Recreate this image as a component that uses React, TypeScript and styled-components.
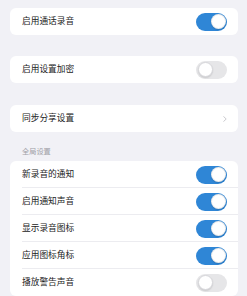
import React from "react";
import styled, { createGlobalStyle } from "styled-components";

const Global = createGlobalStyle`
  html, body { margin: 0; padding: 0; background: #f1f1f6; }
  body { font-family: "Noto Sans CJK SC", "Noto Sans", sans-serif; -webkit-font-smoothing: antialiased; }
`;

const Page = styled.div`
  width: 247px;
  height: 296px;
  overflow: hidden;
  padding: 8px 9px 0 10px;
  box-sizing: border-box;
  display: flex;
  flex-direction: column;
`;

const Card = styled.div<{ $gap?: number }>`
  background: #ffffff;
  border-radius: 6px;
  margin-bottom: ${(p) => p.$gap ?? 0}px;
  overflow: hidden;
  flex-shrink: 0;
`;

const Row = styled.div<{ $divider?: boolean }>`
  height: 27px;
  display: flex;
  align-items: center;
  justify-content: space-between;
  padding: 0 11px 0 12px;
  box-sizing: border-box;
  position: relative;
  ${(p) =>
    p.$divider
      ? `&::after { content: ""; position: absolute; left: 12px; right: 0; bottom: 0; height: 1px; background: #ececf0; }`
      : ""}
`;

const Label = styled.span`
  font-size: 8.7px;
  color: #222;
  line-height: 1;
`;

const SectionTitle = styled.div`
  font-size: 7.2px;
  color: #a0a0a6;
  padding: 16px 0 0 12px;
  height: 30px;
  box-sizing: border-box;
  line-height: 1;
`;

const Track = styled.div<{ $on: boolean }>`
  width: 31px;
  height: 18px;
  border-radius: 9px;
  background: ${(p) => (p.$on ? "#2f86d6" : "#e6e6e8")};
  display: flex;
  align-items: center;
  justify-content: ${(p) => (p.$on ? "flex-end" : "flex-start")};
  padding: 0 1.5px;
  box-sizing: border-box;
`;

const Knob = styled.div<{ $on: boolean }>`
  width: 15px;
  height: 15px;
  border-radius: 50%;
  background: #fff;
  box-sizing: border-box;
  border: 0.5px solid ${(p) => (p.$on ? "rgba(0,0,0,0.08)" : "#d6d6da")};
  box-shadow: 0 1px 1.5px rgba(0, 0, 0, 0.12);
`;

const Toggle = ({ on }: { on: boolean }) => (
  <Track $on={on}>
    <Knob $on={on} />
  </Track>
);

const Chevron = () => (
  <svg width="4" height="6" viewBox="0 0 4 6">
    <path d="M0.7 0.6 L3.2 3 L0.7 5.4" fill="none" stroke="#c4c4c8" strokeWidth="0.9" strokeLinecap="round" strokeLinejoin="round" />
  </svg>
);

const globalItems: { label: string; on: boolean }[] = [
  { label: "新录音的通知", on: true },
  { label: "启用通知声音", on: true },
  { label: "显示录音图标", on: true },
  { label: "应用图标角标", on: true },
  { label: "播放警告声音", on: false },
];

export default function App() {
  return (
    <>
      <Global />
      <Page>
        <Card $gap={21}>
          <Row>
            <Label>启用通话录音</Label>
            <Toggle on={true} />
          </Row>
        </Card>
        <Card $gap={22}>
          <Row>
            <Label>启用设置加密</Label>
            <Toggle on={false} />
          </Row>
        </Card>
        <Card>
          <Row>
            <Label>同步分享设置</Label>
            <Chevron />
          </Row>
        </Card>
        <SectionTitle>全局设置</SectionTitle>
        <Card>
          {globalItems.map((it, i) => (
            <Row key={it.label} $divider={i < globalItems.length - 1}>
              <Label>{it.label}</Label>
              <Toggle on={it.on} />
            </Row>
          ))}
        </Card>
      </Page>
    </>
  );
}
